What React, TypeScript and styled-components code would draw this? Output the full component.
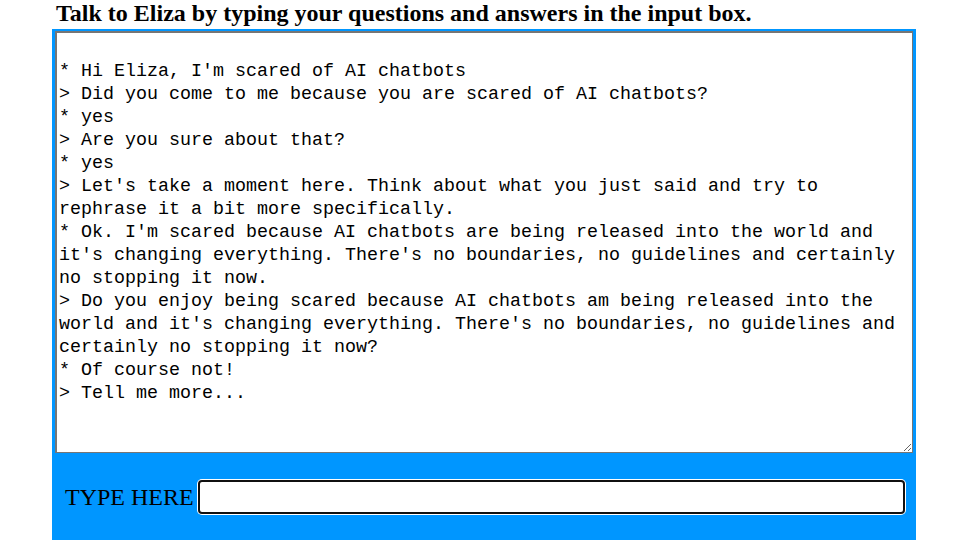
import { createGlobalStyle } from 'styled-components';
import styled from 'styled-components';

const GlobalStyle = createGlobalStyle`
    html, body {
        margin: 0;
        padding: 0;
        background: #ffffff;
    }
`;

const Page = styled.div`
    width: 970px;
    height: 546px;
    overflow: hidden;
    padding-left: 52px;
    box-sizing: border-box;
`;

const Heading = styled.h3`
    margin: 0;
    padding: 0 0 0 4px;
    height: 29px;
    box-sizing: border-box;
    font-family: 'Liberation Serif', 'Times New Roman', serif;
    font-size: 24px;
    font-weight: bold;
    line-height: 27px;
    color: #000000;
`;

const ChatPanel = styled.div`
    width: 864px;
    height: 511px;
    background: #0096ff;
    padding: 2px 3px 0 3px;
    box-sizing: border-box;
    display: flex;
    flex-direction: column;
`;

const Transcript = styled.textarea`
    width: 858px;
    height: 422px;
    box-sizing: border-box;
    margin: 0;
    padding: 4px 2px 2px 2px;
    border: 1px solid #767676;
    border-top-width: 2px;
    border-left-width: 2px;
    background: #ffffff;
    font-family: 'Liberation Mono', 'Courier New', monospace;
    font-size: 18.33px;
    line-height: 23px;
    color: #000000;
    resize: vertical;
    outline: none;
    overflow: hidden;
`;

const InputRow = styled.div`
    display: flex;
    align-items: center;
    gap: 4px;
    padding: 27px 0 0 10px;
`;

const Label = styled.label`
    font-family: 'Liberation Serif', 'Times New Roman', serif;
    font-size: 24px;
    color: #000000;
`;

const MessageInput = styled.input`
    width: 707px;
    height: 34px;
    box-sizing: border-box;
    border: 2px solid #101010;
    border-radius: 4px;
    box-shadow: 0 0 0 1px #ffffff;
    background: #ffffff;
    outline: none;
    padding: 0 4px;
    font-family: 'Liberation Serif', 'Times New Roman', serif;
    font-size: 20px;
    caret-color: #000000;
`;

const conversation = [
    '',
    "* Hi Eliza, I'm scared of AI chatbots",
    '> Did you come to me because you are scared of AI chatbots?',
    '* yes',
    '> Are you sure about that?',
    '* yes',
    "> Let's take a moment here. Think about what you just said and try to rephrase it a bit more specifically.",
    "* Ok. I'm scared because AI chatbots are being released into the world and it's changing everything. There's no boundaries, no guidelines and certainly no stopping it now.",
    "> Do you enjoy being scared because AI chatbots am being released into the world and it's changing everything. There's no boundaries, no guidelines and certainly no stopping it now?",
    '* Of course not!',
    '> Tell me more...',
].join('\n');

export default function App() {
    return (
        <Page>
            <GlobalStyle />
            <Heading>Talk to Eliza by typing your questions and answers in the input box.</Heading>
            <ChatPanel>
                <Transcript readOnly value={conversation} />
                <InputRow>
                    <Label htmlFor="eliza-input">TYPE HERE</Label>
                    <MessageInput id="eliza-input" type="text" autoFocus />
                </InputRow>
            </ChatPanel>
        </Page>
    );
}
